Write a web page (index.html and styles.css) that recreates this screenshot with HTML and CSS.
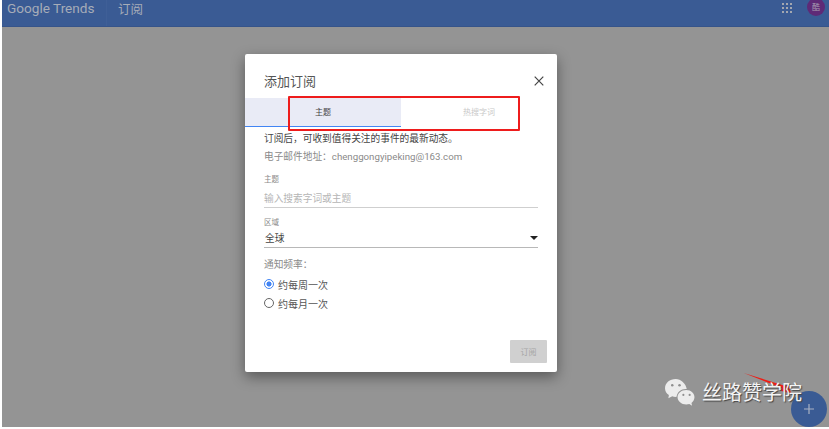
FILE: index.html
```html
<!DOCTYPE html>
<html lang="zh">
<head>
<meta charset="utf-8">
<title>Google Trends</title>
<link rel="stylesheet" href="styles.css">
</head>
<body>
<div class="stage">
  <header class="topbar">
    <span class="logo">Google Trends</span>
    <span class="divider"></span>
    <span class="page-title">订阅</span>
    <span class="spacer"></span>
    <svg class="apps" width="10" height="10" viewBox="0 0 10 10">
      <g fill="#a3a7b0">
        <rect x="0" y="0" width="2" height="2"/><rect x="4" y="0" width="2" height="2"/><rect x="8" y="0" width="2" height="2"/>
        <rect x="0" y="4" width="2" height="2"/><rect x="4" y="4" width="2" height="2"/><rect x="8" y="4" width="2" height="2"/>
        <rect x="0" y="8" width="2" height="2"/><rect x="4" y="8" width="2" height="2"/><rect x="8" y="8" width="2" height="2"/>
      </g>
    </svg>
    <span class="avatar">酷</span>
  </header>
  <main class="backdrop"></main>

  <section class="dialog">
    <div class="dialog-head">
      <h2 class="dialog-title">添加订阅</h2>
      <svg class="close" width="10" height="10" viewBox="0 0 10 10"><path d="M0.7 0.7L9.3 9.3M9.3 0.7L0.7 9.3" stroke="#444" stroke-width="1.2" fill="none"/></svg>
    </div>
    <div class="tabs">
      <div class="tab tab-active">主题</div>
      <div class="tab tab-idle">热搜字词</div>
    </div>
    <div class="dialog-body">
      <p class="intro">订阅后，可收到值得关注的事件的最新动态。</p>
      <p class="email">电子邮件地址：chenggongyipeking@163.com</p>
      <label class="field-label field-topic">主题</label>
      <div class="field-input placeholder">输入搜索字词或主题</div>
      <label class="field-label field-region">区域</label>
      <div class="field-input select"><span>全球</span><span class="caret"></span></div>
      <p class="freq">通知频率：</p>
      <div class="radio-row radio-first"><span class="radio radio-on"></span>约每周一次</div>
      <div class="radio-row"><span class="radio"></span>约每月一次</div>
    </div>
    <div class="dialog-foot"><span class="btn">订阅</span></div>
  </section>

  <div class="annotation-box"></div>
  <svg class="annotation-arrow" width="52" height="24" viewBox="0 0 52 24"><path d="M2.700 0L44.300 13L47.700 12L50 20.300L39.300 17.700L41 15.300Z" fill="#f01c14"/></svg>
  <button class="fab"><svg width="10" height="10" viewBox="0 0 10 10"><path d="M5 0V10M0 5H10" stroke="#a9b2c4" stroke-width="1.200"/></svg></button>
  <div class="watermark">
    <svg width="31" height="28" viewBox="0 0 32 29">
      <path d="M12 1C6 1 1 5 1 10.500C1 13.500 2.500 16 5 17.500L4.500 21L8.500 19C10 19.500 11.500 19.700 13 19.500C13.500 14.500 18 11 23.500 11.500C22.500 5.500 17.500 1 12 1Z" fill="#ececec"/>
      <path d="M23 12.500C17.800 12.500 14 16 14 20C14 24 18 27.500 23 27.500C24.200 27.500 25.300 27.300 26.200 27L29 28.800L28.400 25.800C30.200 24.400 31.500 22.300 31.500 20C31.500 16 28 12.500 23 12.500Z" fill="#ececec"/>
      <circle cx="8.500" cy="7.500" r="1.300" fill="#8f8f8f"/><circle cx="16" cy="7.500" r="1.300" fill="#8f8f8f"/>
      <circle cx="20" cy="17.500" r="1.100" fill="#8f8f8f"/><circle cx="26.500" cy="17.500" r="1.100" fill="#8f8f8f"/>
    </svg>
    <span class="watermark-text">丝路赞学院</span>
  </div>
</div>
</body>
</html>
```
FILE: styles.css
```css
* { box-sizing: border-box; }
html, body { margin: 0; padding: 0; height: 100%; background: #fff; overflow: hidden; }
body { font-family: Roboto, "Noto Sans CJK SC", sans-serif; }

.stage { position: relative; width: 827px; height: 427px; margin-left: 2px; display: flex; flex-direction: column; background: #949494; overflow: hidden; }

.topbar { height: 27px; flex: none; display: flex; align-items: flex-start; background: #3a5b94; border-bottom: 1px solid #36548a; padding-left: 5px; color: #a9b0bd; }
.logo { font-family: Roboto, "Liberation Sans", sans-serif; font-size: 13.600px; line-height: 17px; color: #a6acb8; width: 99px; }
.divider { width: 1px; height: 26px; background: #3f5f97; }
.page-title { font-family: "Noto Sans CJK SC", sans-serif; font-size: 12.500px; line-height: 16px; margin: 1px 0 0 11px; color: #a6acb8; }
.spacer { flex: 1; }
.apps { margin: 3px 15px 0 0; }
.avatar { width: 18px; height: 18px; margin: -2px 4px 0 0; border-radius: 50%; background: #5e2a77; color: #a89ab0; font: 8px/18px "Noto Sans CJK SC", sans-serif; text-align: center; }

.backdrop { flex: 1; }

.dialog { position: absolute; left: 243px; top: 54px; width: 312px; height: 318px; display: flex; flex-direction: column; background: #fff; border-radius: 2px; box-shadow: 0 5px 14px rgba(0,0,0,.4); font-family: "Noto Sans CJK SC", sans-serif; }
.dialog-head { height: 44px; flex: none; display: flex; align-items: flex-start; justify-content: space-between; padding: 19px 13px 0 19px; }
.dialog-title { margin: 0; font-size: 13px; line-height: 15px; font-weight: 400; color: #555; }
.close { margin-top: 3px; }

.tabs { height: 29px; flex: none; display: flex; }
.tab { width: 156px; font-size: 8px; line-height: 28px; text-align: center; }
.tab-active { background: #e9ebf6; border-bottom: 1.500px solid #4285f4; color: #444; }
.tab-idle { color: #c9c9c9; }

.dialog-body { flex: 1; padding: 0 19px; }
.intro { margin: 4px 0 0; font-size: 9.700px; line-height: 14px; color: #444; }
.email { margin: 5px 0 0; font-family: Roboto, "Noto Sans CJK SC", sans-serif; font-size: 9.700px; line-height: 14px; color: #8a8a8a; }
.field-label { display: block; font-size: 7.500px; line-height: 10px; color: #8a8a8a; }
.field-topic { margin-top: 10px; }
.field-region { margin-top: 9px; }
.field-input { height: 19px; border-bottom: 1px solid #cfcfcf; font-size: 9.700px; line-height: 18px; }
.placeholder { margin-top: 5px; color: #b5b5b5; }
.select { margin-top: 1px; color: #444; display: flex; align-items: center; justify-content: space-between; height: 20px; padding: 0 0 0 1px; border-bottom-color: #b8b8b8; }
.caret { width: 0; height: 0; border-left: 4px solid transparent; border-right: 4px solid transparent; border-top: 4px solid #222; }
.freq { margin: 9px 0 0; font-size: 9.700px; line-height: 14px; color: #8a8a8a; }
.radio-row { display: flex; align-items: center; gap: 4px; height: 14px; font-size: 10px; color: #555; margin-top: 5px; }
.radio-first { margin-top: 6px; }
.radio { width: 10px; height: 10px; flex: none; border-radius: 50%; border: 1px solid #666; background: #fff; }
.radio-on { border-color: #4285f4; background: radial-gradient(circle, #4285f4 0 2.300px, #fff 2.800px); }

.dialog-foot { flex: none; display: flex; justify-content: flex-end; padding: 0 10px 9px; }
.btn { width: 37px; height: 23px; border-radius: 1px; background: #d0d0d0; color: #a5a5a5; font-size: 8px; line-height: 23px; text-align: center; }

.annotation-box { position: absolute; left: 286px; top: 96px; width: 232px; height: 35px; border: 2px solid #ee1c1c; border-radius: 1px; }

.fab { position: absolute; left: 789px; top: 391px; width: 36px; height: 36px; padding: 0; border: 0; border-radius: 50%; background: #3a5b94; display: flex; align-items: center; justify-content: center; }
.annotation-arrow { position: absolute; left: 739px; top: 373px; z-index: 1; }

.watermark { position: absolute; z-index: 2; left: 662px; top: 378px; display: flex; align-items: center; gap: 7px; }
.watermark-text { font-family: "Noto Sans CJK SC", sans-serif; font-size: 20px; line-height: 26px; color: #f4f4f4; text-shadow: 1px 1px 1px #444; }
```
